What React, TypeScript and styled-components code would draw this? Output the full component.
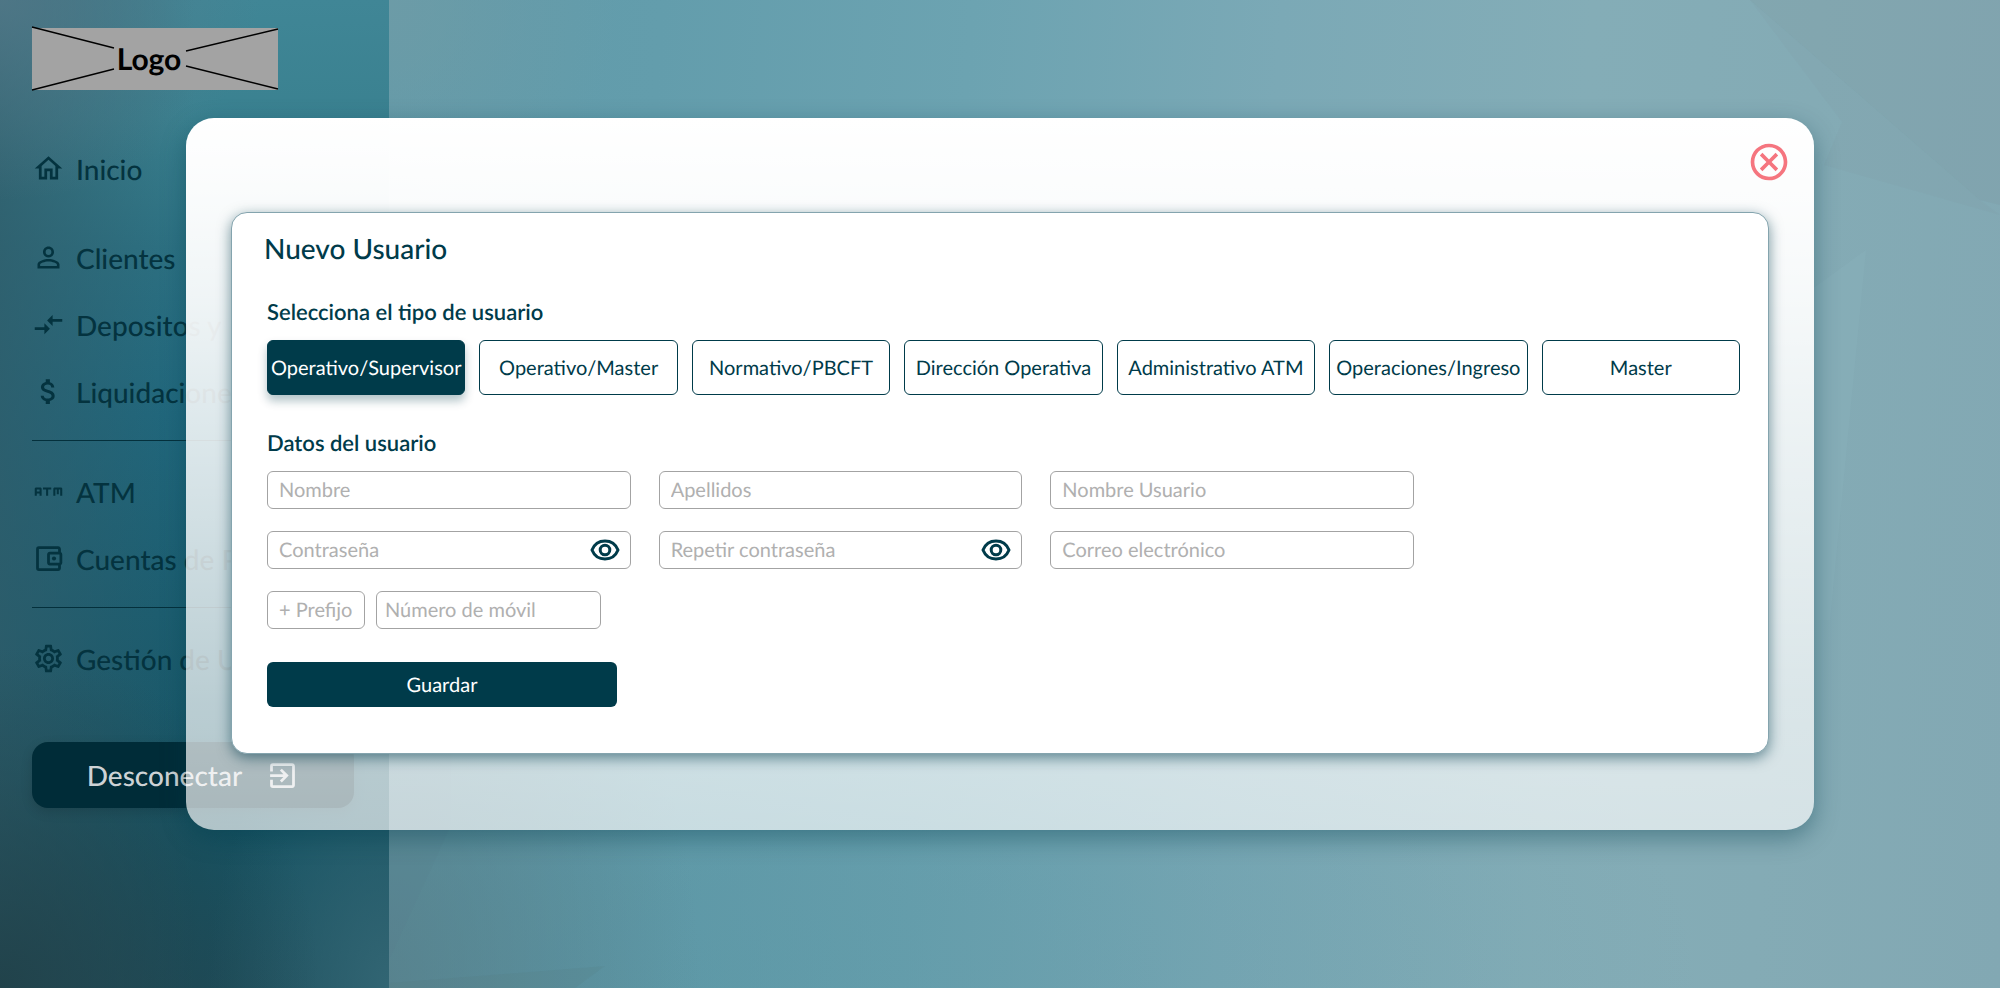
import React, { useState } from "react";
import styled, { createGlobalStyle, css } from "styled-components";
import {
  MdAtm,
  MdAttachMoney,
  MdCompareArrows,
  MdExitToApp,
  MdOutlineAccountBalanceWallet,
  MdOutlineCancel,
  MdOutlineHome,
  MdOutlineSettings,
  MdPersonOutline,
} from "react-icons/md";

const ink = "#003b4a";

const GlobalStyle = createGlobalStyle`
  *, *::before, *::after { box-sizing: border-box; }
  body {
    margin: 0;
    font-family: Lato, "Liberation Sans", sans-serif;
    color: ${ink};
    text-rendering: geometricPrecision;
  }
  button, input { font: inherit; text-rendering: inherit; }
`;

const Page = styled.div`
  position: relative;
  display: flex;
  min-height: 100vh;
  overflow: hidden;
  background:
    radial-gradient(ellipse 16% 50% at 19% 100%, rgba(86, 122, 132, 0.7), rgba(86, 122, 132, 0) 100%),
    radial-gradient(ellipse 60% 55% at 25% 100%, rgba(84, 144, 158, 0.5), rgba(84, 144, 158, 0) 100%),
    radial-gradient(ellipse 12% 24% at 19% 0%, rgba(114, 156, 166, 0.7), rgba(114, 156, 166, 0) 100%),
    linear-gradient(94deg, #609aa9 19%, #639dac 32%, #6ca3b1 47%, #7ba9b6 62%, #84adb7 77%, #84abb5 88%, #82a8b3 100%);
`;

const Facets = styled.svg`
  position: absolute;
  inset: 0;
  width: 100%;
  height: 100%;
`;

const Sidebar = styled.aside`
  position: relative;
  width: 389px;
  padding: 28px 0 32px 32px;
  background:
    radial-gradient(ellipse 260px 200px at 0 0, rgba(84, 122, 138, 0.8), rgba(84, 122, 138, 0) 100%),
    radial-gradient(ellipse 320px 340px at 0 100%, rgba(32, 64, 72, 0.9), rgba(32, 64, 72, 0) 100%),
    radial-gradient(ellipse 180px 300px at 389px 100%, rgba(52, 104, 118, 0.9), rgba(52, 104, 118, 0) 100%),
    linear-gradient(90deg, rgba(48, 92, 105, 0.75), rgba(48, 92, 105, 0) 50%),
    linear-gradient(180deg, #408696 0%, #3a8190 12%, #2c7284 25%, #1f687e 42%, #1a5d70 62%, #165464 84%, #1d4e5c 100%);
`;

const Logo = styled.div`
  position: relative;
  display: flex;
  align-items: center;
  justify-content: center;
  width: 246px;
  height: 62px;
  padding-right: 12px;
  background: #a3a3a3;
  color: #000;
  font-size: 30px;
  font-weight: 700;
`;

const LogoLines = styled.svg`
  position: absolute;
  inset: 0;
`;

const Nav = styled.nav`
  display: flex;
  flex-direction: column;
  padding-top: 56px;
`;

const NavItem = styled.a<{ $spaced?: boolean }>`
  display: flex;
  align-items: center;
  gap: 11px;
  height: 45px;
  margin-bottom: ${(p) => (p.$spaced ? 44 : 22)}px;
  color: #04333f;
  font-size: 28px;
  font-weight: 500;
  white-space: nowrap;
  text-decoration: none;

  svg {
    flex: none;
    width: 33px;
    height: 33px;
  }
`;

const Divider = styled.hr`
  width: 322px;
  height: 1px;
  margin: 4px 0 28px;
  border: 0;
  background: #04303c;
`;

const Logout = styled.button`
  display: flex;
  align-items: center;
  justify-content: center;
  gap: 24px;
  width: 322px;
  height: 66px;
  margin-top: 39px;
  border: 0;
  border-radius: 16px;
  background: #002c38;
  color: #cdd2d5;
  font-size: 28px;
  font-weight: 500;
  box-shadow: 0 4px 12px rgba(0, 0, 0, 0.14);

  svg {
    width: 33px;
    height: 33px;
  }
`;

const Overlay = styled.div`
  position: absolute;
  inset: 0;
  padding: 118px 186px;
`;

const Modal = styled.section`
  padding: 22px 45px 76px;
  border-radius: 28px;
  background: linear-gradient(
    180deg,
    #fff 0%,
    rgba(255, 255, 255, 0.97) 13%,
    rgba(255, 255, 255, 0.93) 25%,
    rgba(255, 255, 255, 0.86) 41%,
    rgba(255, 255, 255, 0.7) 82%,
    rgba(255, 255, 255, 0.66) 100%
  );
  box-shadow: 0 8px 24px rgba(0, 59, 74, 0.4);
`;

const ModalBar = styled.div`
  display: flex;
  justify-content: flex-end;
  height: 72px;
  margin-right: -22px;
`;

const IconButton = styled.button<{ $tone: string }>`
  display: flex;
  align-items: center;
  justify-content: center;
  height: fit-content;
  padding: 0;
  border: 0;
  background: none;
  color: ${(p) => p.$tone};
`;

const Card = styled.form`
  padding: 17px 28px 46px 35px;
  border: 1px solid #84a4ae;
  border-radius: 16px;
  background: #fff;
  box-shadow: 0 4px 14px rgba(0, 59, 74, 0.55);
`;

const Title = styled.h1`
  margin: 0 0 31px -3px;
  font-size: 28px;
  font-weight: 500;
  line-height: 36px;
`;

const GroupTitle = styled.h2`
  margin: 0 0 13px;
  font-size: 22px;
  font-weight: 600;
  line-height: 30px;
`;

const TypeRow = styled.div`
  display: grid;
  grid-template-columns: repeat(7, minmax(0, 1fr));
  gap: 14px;
  margin-bottom: 33px;
`;

const TypeButton = styled.button<{ $active: boolean }>`
  height: 55px;
  padding: 0;
  border: 1px solid ${ink};
  border-radius: 6px;
  background: #fff;
  color: ${ink};
  font-size: 20px;
  white-space: nowrap;

  ${(p) =>
    p.$active &&
    css`
      background: ${ink};
      color: #fff;
      box-shadow: 0 6px 10px rgba(0, 59, 74, 0.3);
    `}
`;

const Fields = styled.div`
  display: grid;
  grid-template-columns: repeat(3, minmax(0, 1fr));
  gap: 22px 28px;
  max-width: 1147px;
`;

const Box = styled.div`
  display: flex;
  align-items: center;
  height: 38px;
  padding: 0 10px 0 11px;
  border: 1px solid #a3a3a3;
  border-radius: 6px;
  background: #fff;
`;

const PrefixBox = styled(Box)`
  width: 98px;
`;

const PhoneBox = styled(Box)`
  width: 225px;
  padding-left: 8px;
`;

const TextInput = styled.input`
  flex: 1;
  min-width: 0;
  padding: 0;
  border: 0;
  outline: 0;
  background: none;
  color: ${ink};
  font-size: 20px;

  &::placeholder {
    color: #b0b0b0;
    opacity: 1;
  }
`;

const PhoneRow = styled.div`
  display: flex;
  gap: 11px;
`;

const Save = styled.button`
  width: 350px;
  height: 45px;
  margin-top: 33px;
  border: 0;
  border-radius: 6px;
  background: ${ink};
  color: #fff;
  font-size: 20px;
`;

const userTypes = [
  "Operativo/Supervisor",
  "Operativo/Master",
  "Normativo/PBCFT",
  "Dirección Operativa",
  "Administrativo ATM",
  "Operaciones/Ingreso",
  "Master",
];

const fields = [
  { label: "Nombre" },
  { label: "Apellidos" },
  { label: "Nombre Usuario" },
  { label: "Contraseña", secret: true },
  { label: "Repetir contraseña", secret: true },
  { label: "Correo electrónico" },
];

function EyeIcon() {
  return (
    <svg width="30" height="24" viewBox="0 0 30 24" fill="none" stroke="currentColor" strokeWidth="3" aria-hidden="true">
      <path d="M2 12C4.200 6.400 9.200 3 15 3S25.800 6.400 28 12C25.800 17.600 20.800 21 15 21S4.200 17.600 2 12Z" strokeLinejoin="round" />
      <circle cx="15" cy="12" r="4.800" />
    </svg>
  );
}

function Field({ label, secret }: { label: string; secret?: boolean }) {
  const [shown, setShown] = useState(false);
  return (
    <Box>
      <TextInput type={secret && !shown ? "password" : "text"} placeholder={label} aria-label={label} />
      {secret && (
        <IconButton type="button" $tone={ink} aria-label="Mostrar contraseña" onClick={() => setShown(!shown)}>
          <EyeIcon />
        </IconButton>
      )}
    </Box>
  );
}

export default function App() {
  const [selected, setSelected] = useState(userTypes[0]);

  return (
    <Page>
      <GlobalStyle />
      <Facets viewBox="0 0 2000 988" preserveAspectRatio="none" aria-hidden="true">
        <path d="M1750 0H2000V205L1980 200Z" fill="#7b979f" opacity=".25" />
        <path d="M1750 0L1842 122L1824 165L2000 215L1980 200Z" fill="#7b979f" opacity=".1" />
        <path d="M1866 250L1814 288V620H1830Z" fill="#93bac2" opacity=".2" />
        <path d="M389 150L460 240L450 828L389 960Z" fill="#57798a" opacity=".1" />
        <path d="M389 983L605 966L575 988H389Z" fill="#527077" opacity=".12" />
      </Facets>

      <Sidebar>
        <Logo>
          <LogoLines viewBox="0 0 246 62" width="246" height="62" overflow="visible" aria-hidden="true">
            <path d="M0-1L82 20M0 62L82 41M154 23L246 1M154 38L246 61" stroke="#000" strokeWidth="1.3" fill="none" />
          </LogoLines>
          Logo
        </Logo>
        <Nav>
          <NavItem href="#inicio" $spaced><MdOutlineHome />Inicio</NavItem>
          <NavItem href="#clientes"><MdPersonOutline />Clientes</NavItem>
          <NavItem href="#depositos"><MdCompareArrows />Depositos y</NavItem>
          <NavItem href="#liquidaciones"><MdAttachMoney />Liquidaciones</NavItem>
          <Divider />
          <NavItem href="#atm"><MdAtm />ATM</NavItem>
          <NavItem href="#cuentas"><MdOutlineAccountBalanceWallet />Cuentas de Pago</NavItem>
          <Divider />
          <NavItem href="#usuarios"><MdOutlineSettings />Gestión de Usuarios</NavItem>
        </Nav>
        <Logout type="button">Desconectar<MdExitToApp /></Logout>
      </Sidebar>

      <Overlay>
        <Modal role="dialog" aria-labelledby="new-user-title">
          <ModalBar>
            <IconButton type="button" $tone="#f5757f" aria-label="Cerrar">
              <MdOutlineCancel size={44} />
            </IconButton>
          </ModalBar>
          <Card>
            <Title id="new-user-title">Nuevo Usuario</Title>
            <GroupTitle>Selecciona el tipo de usuario</GroupTitle>
            <TypeRow>
              {userTypes.map((type) => (
                <TypeButton
                  key={type}
                  type="button"
                  $active={type === selected}
                  aria-pressed={type === selected}
                  onClick={() => setSelected(type)}
                >
                  {type}
                </TypeButton>
              ))}
            </TypeRow>
            <GroupTitle>Datos del usuario</GroupTitle>
            <Fields>
              {fields.map((field) => (
                <Field key={field.label} {...field} />
              ))}
              <PhoneRow>
                <PrefixBox>
                  <TextInput placeholder="+ Prefijo" aria-label="Prefijo" />
                </PrefixBox>
                <PhoneBox>
                  <TextInput type="tel" placeholder="Número de móvil" aria-label="Número de móvil" />
                </PhoneBox>
              </PhoneRow>
            </Fields>
            <Save type="button">Guardar</Save>
          </Card>
        </Modal>
      </Overlay>
    </Page>
  );
}
